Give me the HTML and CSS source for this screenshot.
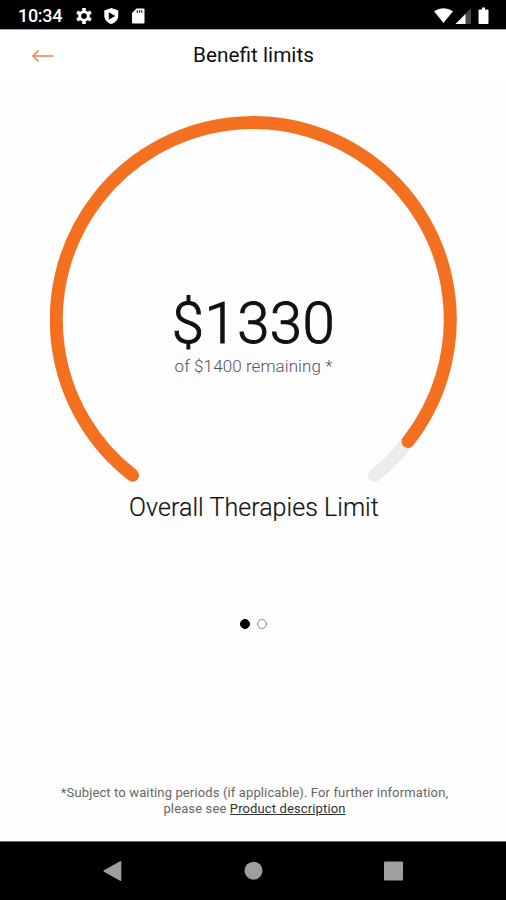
FILE: index.html
```
<!DOCTYPE html>
<html lang="en">
<head>
<meta charset="utf-8">
<title>Benefit limits</title>
<link rel="stylesheet" href="styles.css">
</head>
<body>
<div class="screen">
  <div class="status">
    <span class="clock">10:34</span>
    <svg class="status-left" width="72" height="18" viewBox="0 0 72 18">
      <g fill="#fff">
        <circle cx="9" cy="9" r="4.2" fill="none" stroke="#fff" stroke-width="3.2"/>
        <g stroke="#fff" stroke-width="3.6">
          <path d="M9 1v3M9 14v3M2.1 5l2.6 1.500M13.300 11.500l2.600 1.500M2.100 13l2.600-1.500M13.300 6.500L15.900 5"/>
        </g>
        <circle cx="9" cy="9" r="2.7" fill="#000"/>
        <path d="M36.300 1L43.300 3.600V8.500C43.300 12.500 40.500 15.800 36.300 17C32.100 15.800 29.300 12.500 29.300 8.500V3.600Z"/>
        <path d="M33.800 5.300L40.200 9L33.800 12.700Z" fill="#000"/>
        <path d="M61.500 1.500H68.500Q69.500 1.500 69.500 2.500V15.500Q69.500 16.500 68.500 16.500H58Q57 16.500 57 15.500V6Z"/>
      </g>
      <path d="M62.300 3.200v2.500M64.500 3.200v2.500M66.700 3.200v2.500" stroke="#222" stroke-width="1.200"/>
    </svg>
    <svg class="status-right" width="58" height="18" viewBox="0 0 58 18">
      <path d="M0 4.200Q9.500 -1.600 19 4.200L9.500 16Z" fill="#fff"/>
      <path d="M37 1V17H21.500Z" fill="#474747"/>
      <path d="M31.500 7V17H21.500Z" fill="#fff"/>
      <path d="M45.500 2.500H48V0.500H51V2.500H53.500Q54.500 2.500 54.500 3.500V16Q54.500 17 53.500 17H45.500Q44.500 17 44.500 16V3.500Q44.500 2.500 45.500 2.500Z" fill="#fff"/>
    </svg>
  </div>
  <header class="header">
    <svg class="back" width="24" height="16" viewBox="0 0 24 16">
      <path d="M22.500 8H2M7.500 2.500L2 8L7.500 13.500" fill="none" stroke="#ee8051" stroke-width="1.500"/>
    </svg>
    <h1 class="title">Benefit limits</h1>
  </header>
  <main class="main">
    <div class="gauge">
      <svg class="ring" width="407" height="370" viewBox="50 116 407 370" fill="none" stroke-width="13" stroke-linecap="round">
        <path d="M408 441.500A197 197 0 0 1 374.500 475.500" stroke="#ececec"/>
        <path d="M132.500 475.200A197 197 0 1 1 408 441.500" stroke="#f37021"/>
      </svg>
      <div class="reading">
        <div class="amount">$1330</div>
        <div class="remaining">of $1400 remaining *</div>
      </div>
    </div>
    <h2 class="limit">Overall Therapies Limit</h2>
    <div class="dots"><span class="dot active"></span><span class="dot"></span></div>
    <p class="note">*Subject to waiting periods (if applicable). For further information,<br>please see <a class="link">Product description</a></p>
  </main>
  <nav class="nav">
    <svg width="506" height="58" viewBox="0 842 506 58" fill="#9e9e9e">
      <path d="M104 870.200L120 861.200Q121.300 860.600 121.300 862V880Q121.300 881.400 120 880.800L104 871.800Q102.800 871 104 870.200Z"/>
      <circle cx="253.500" cy="870.700" r="9"/>
      <rect x="384" y="861.500" width="19" height="19" rx="1"/>
    </svg>
  </nav>
</div>
</body>
</html>
```

FILE: styles.css
```
body { margin: 0; font-family: Roboto, "Liberation Sans", sans-serif; }
.screen { width: 506px; height: 900px; display: flex; flex-direction: column; background: #fdfdfd; overflow: hidden; }
.status { height: 29px; flex: none; box-sizing: border-box; background: #000; box-shadow: 0 1px 0 #aaa; display: flex; align-items: center; padding: 2px 14px 0 18px; z-index: 1; }
.clock { color: #fff; font-size: 18px; font-weight: 500; line-height: 20px; width: 57px; letter-spacing: -0.3px; white-space: nowrap; }
.status-right { margin-left: auto; }
.header { height: 51px; flex: none; display: grid; grid-template-columns: 64px 1fr 64px; align-items: center; padding-top: 1px; background: #fff; }
.back { margin-left: 31px; }
.title { margin: 0 0 2px 1px; text-align: center; font-size: 20.8px; font-weight: 400; line-height: 24px; color: #111; }
.main { flex: 1; display: flex; flex-direction: column; align-items: center; padding-top: 35px; }
.gauge { display: grid; width: 407px; height: 370px; margin-left: 1px; }
.ring, .reading { grid-area: 1 / 1; }
.reading { padding-top: 174px; text-align: center; }
.amount { font-size: 58px; line-height: 66px; font-weight: 300; letter-spacing: 0.5px; color: #111; -webkit-text-stroke: 1px #111; }
.remaining { font-size: 17px; line-height: 20px; font-weight: 300; letter-spacing: 0.08px; color: #555; }
.limit { margin: 6px 0 0 2px; font-size: 25px; line-height: 32px; font-weight: 300; letter-spacing: 0.05px; color: #111; -webkit-text-stroke: 0.2px #111; }
.dots { display: flex; gap: 7px; margin-top: 95px; }
.dot { width: 10px; height: 10px; box-sizing: border-box; border: 1px solid #888; border-radius: 50%; }
.active { background: #000; border-color: #000; }
.note { margin: 156px 0 0 3px; text-align: center; font-size: 13px; line-height: 16px; letter-spacing: 0.13px; color: #666; white-space: nowrap; }
.link { color: #333; text-decoration: underline; }
.nav { height: 58px; flex: none; background: #000; box-shadow: 0 -1px 0 #666; }
.nav svg { display: block; }
```
